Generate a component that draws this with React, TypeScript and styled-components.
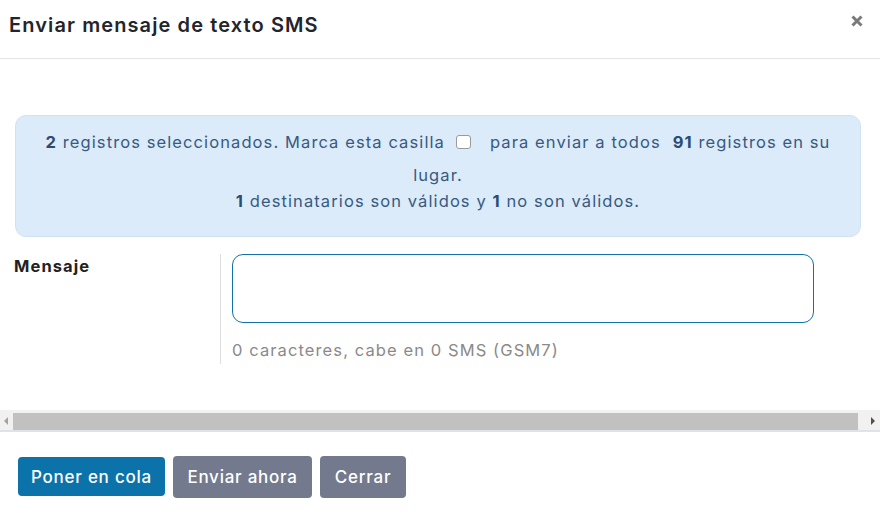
import React from "react";
import styled, { createGlobalStyle } from "styled-components";

const Global = createGlobalStyle`
  html, body { margin: 0; padding: 0; background: #ffffff; }
  body { font-family: "Inter", "Open Sans", sans-serif; color: #212529; }
  * { box-sizing: border-box; }
`;

const Modal = styled.div`
  width: 880px;
  height: 522px;
  background: #fff;
  display: flex;
  flex-direction: column;
  overflow: hidden;
`;

const Header = styled.div`
  height: 59px;
  flex: none;
  display: flex;
  align-items: center;
  justify-content: space-between;
  padding: 0 17px 0 9px;
  border-bottom: 1px solid #e3e3e3;
`;

const Title = styled.h1`
  margin: 0 0 9px;
  font-size: 20px;
  font-weight: 600;
  color: #22252b;
  letter-spacing: 1.1px;
`;

const Close = styled.button`
  border: 0;
  background: none;
  padding: 0;
  width: 13px;
  height: 13px;
  margin-bottom: 16px;
  display: flex;
  align-items: center;
  justify-content: center;
  cursor: pointer;
`;

const Body = styled.div`
  flex: none;
  height: 373px;
  display: flex;
  flex-direction: column;
  padding-top: 56px;
  font-size: 16.5px;
  letter-spacing: 1.1px;
`;

const Alert = styled.div`
  margin: 0 19px 0 15px;
  height: 122px;
  background: #dbebfa;
  border: 1px solid #cfe2f5;
  border-radius: 11px;
  padding: 10px 22px 0;
  text-align: center;
  color: #385a80;
`;

const AlertLine = styled.div<{ $lh: number }>`
  line-height: ${(p) => p.$lh}px;
`;

const Num = styled.b`
  font-weight: 700;
  color: #2b4b72;
`;

const Check = styled.input.attrs({ type: "checkbox" })`
  appearance: none;
  width: 15px;
  height: 14px;
  margin: 0 19px 0 11px;
  border: 1px solid #9a9a9a;
  border-radius: 3px;
  background: #fff;
  vertical-align: -1px;
`;

const Gap = styled.span`
  display: inline-block;
  width: 12px;
`;

const FormRow = styled.div`
  display: flex;
  margin-top: 17px;
`;

const Label = styled.div`
  width: 221px;
  flex: none;
  padding: 2px 0 0 14px;
  font-weight: 700;
  color: #222;
  border-right: 1px solid #dedede;
`;

const Field = styled.div`
  display: flex;
  flex-direction: column;
  padding-left: 11px;
  padding-bottom: 4px;
`;

const TextArea = styled.textarea`
  width: 582px;
  height: 69px;
  border: 1px solid #1272a8;
  border-radius: 11px;
  resize: none;
  outline: none;
  font: inherit;
`;

const Help = styled.div`
  margin-top: 17px;
  color: #8a8a8a;
`;

const ScrollBar = styled.div`
  margin-top: auto;
  height: 22px;
  background: #f1f1f1;
  border-bottom: 2px solid #dfe3e8;
  display: flex;
  align-items: center;
  padding: 2px 0 0;
`;

const Arrow = styled.div`
  width: 13px;
  height: 17px;
  display: flex;
  align-items: center;
  justify-content: center;
  flex: none;
`;

const Thumb = styled.div`
  flex: 1;
  height: 17px;
  background: #c1c1c1;
  margin-right: 9px;
`;

const Footer = styled.div`
  flex: 1;
  display: flex;
  align-items: flex-start;
  gap: 8px;
  padding: 24px 0 0 18px;
`;

const Button = styled.button<{ $primary?: boolean }>`
  height: ${(p) => (p.$primary ? 39 : 42)}px;
  margin-top: ${(p) => (p.$primary ? 1 : 0)}px;
  padding: ${(p) => (p.$primary ? "0 13px" : "0 14.5px")};
  border: 0;
  border-radius: 4px;
  background: ${(p) => (p.$primary ? "#0b73a9" : "#737a8d")};
  color: #fff;
  font-family: inherit;
  font-size: 17px;
  font-weight: 500;
  letter-spacing: 0.75px;
  cursor: pointer;
`;

export default function App() {
  return (
    <>
      <Global />
      <Modal>
        <Header>
          <Title>Enviar mensaje de texto SMS</Title>
          <Close aria-label="Cerrar">
            <svg width="12" height="12" viewBox="0 0 12 12">
              <path d="M1.5 1.5 L10.5 10.5 M10.5 1.5 L1.5 10.5" stroke="#7a7a7a" strokeWidth="3" strokeLinecap="butt" />
            </svg>
          </Close>
        </Header>
        <Body>
          <Alert>
            <AlertLine $lh={33}>
              <Num>2</Num> registros seleccionados. Marca esta casilla
              <Check />
              para enviar a todos<Gap /><Num>91</Num> registros en su lugar.
            </AlertLine>
            <AlertLine $lh={18}>
              <Num>1</Num> destinatarios son válidos y <Num>1</Num> no son válidos.
            </AlertLine>
          </Alert>
          <FormRow>
            <Label>Mensaje</Label>
            <Field>
              <TextArea />
              <Help>0 caracteres, cabe en 0 SMS (GSM7)</Help>
            </Field>
          </FormRow>
          <ScrollBar>
            <Arrow>
              <svg width="5" height="8" viewBox="0 0 5 8"><path d="M4 0 L0 4 L4 8 Z" fill="#a3a3a3" /></svg>
            </Arrow>
            <Thumb />
            <Arrow>
              <svg width="5" height="8" viewBox="0 0 5 8"><path d="M0 0 L4 4 L0 8 Z" fill="#505050" /></svg>
            </Arrow>
          </ScrollBar>
        </Body>
        <Footer>
          <Button $primary>Poner en cola</Button>
          <Button>Enviar ahora</Button>
          <Button>Cerrar</Button>
        </Footer>
      </Modal>
    </>
  );
}
